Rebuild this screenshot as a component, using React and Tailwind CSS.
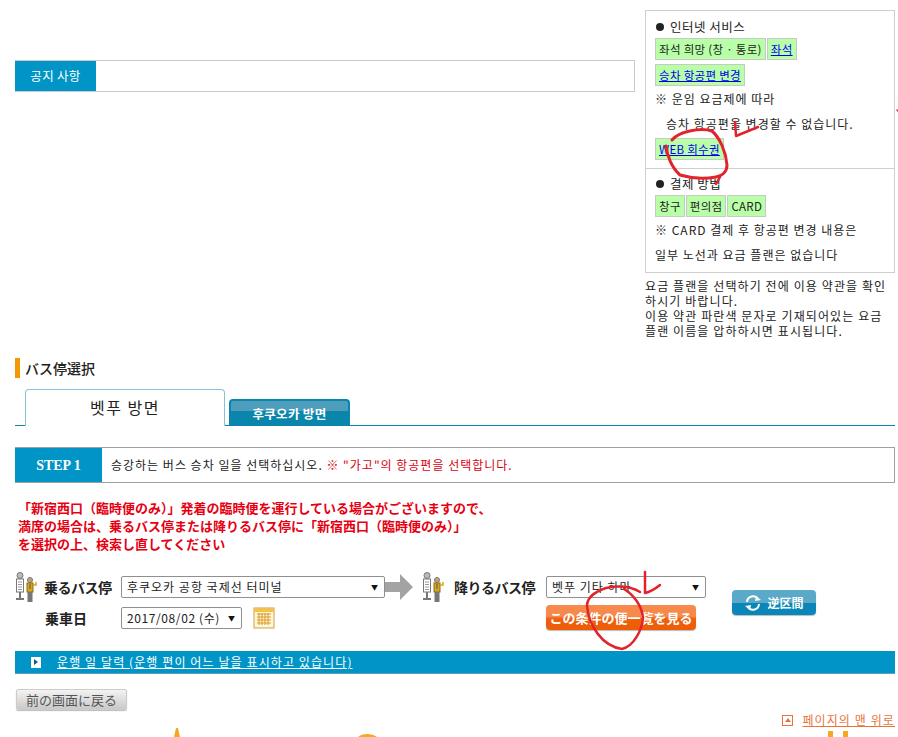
const kr = "font-['Noto_Sans_CJK_KR',sans-serif]";
const jp = "font-['Noto_Sans_CJK_JP',sans-serif]";

const Chip = ({ children, link }) => (
    <span className={`inline-block h-[22px] bg-[#b9ffa8] border border-[#c8c8c8] px-[3px] leading-[20px] text-[11.5px] tracking-[0.3px] mr-[1px] whitespace-nowrap ${link ? "text-[#0000ee] underline" : "text-[#222]"}`}>
        {children}
    </span>
);

const Heading = ({ children }) => (
    <div className="text-[12.500px] leading-[18px] tracking-[0.5px] flex items-center whitespace-nowrap">
        <span className="w-[8px] h-[8px] rounded-full bg-[#222] ml-[1px] mr-[6px]" />
        {children}
    </div>
);

const BusStopIcon = () => (
    <svg width="23" height="30" viewBox="0 0 23 30" className="shrink-0">
        <circle cx="5" cy="3.500" r="3" fill="#bbb" stroke="#777" />
        <rect x="1.500" y="7" width="7" height="13" fill="#fff" stroke="#777" />
        <path d="M3 10h4M3 12.500h4M3 15h4M3 17.500h4" stroke="#999" />
        <rect x="4" y="20" width="2" height="7" fill="#777" />
        <rect x="1" y="26" width="8" height="2" fill="#777" />
        <circle cx="15" cy="8" r="2.500" fill="#c9a27a" stroke="#777" />
        <rect x="12" y="11" width="6" height="9" fill="#d8a81c" stroke="#8a6d1a" />
        <path d="M15 12v5" stroke="#555" />
        <rect x="12.500" y="20" width="5" height="10" fill="#777" />
        <path d="M18 13h3v-3" fill="none" stroke="#d8a81c" strokeWidth="1.500" />
    </svg>
);

const SelectBox = ({ width, tracking, children }) => (
    <div className={`${width} h-[22px] shrink-0 bg-white border border-[#8f8f8f] rounded-[2px] flex items-center justify-between pl-[5px] pr-[6px] text-[12px] text-[#222] whitespace-nowrap ${kr}`}>
        <span className={tracking}>{children}</span>
        <span className="text-[7px] text-[#111]">▼</span>
    </div>
);

const Annotations = () => (
    <svg className="absolute inset-0 pointer-events-none" width="898" height="737" viewBox="0 0 898 737" fill="none">
        <g stroke="#e2232b" strokeLinecap="round" strokeLinejoin="round">
            <path d="M672 140C678 132 700 127 712 131C720 138 726 152 727 165C727 172 722 176 716 177C704 179 690 178 680 175C672 168 667 156 666 146" strokeWidth="3" />
            <path d="M720 177L716 184" strokeWidth="2.500" />
            <path d="M735 122L736 136L758 127" strokeWidth="2.500" />
            <path d="M897 110L898 111" strokeWidth="1.500" />
            <path d="M640 592C630 586 616 586 606 588C594 592 587 598 587 606C589 626 602 646 622 649C634 646 642 630 643 618C642 606 634 595 624 589" strokeWidth="2.500" />
            <path d="M645 572L645 593C650 592 655 589 660 585" strokeWidth="2.500" />
        </g>
        <g fill="#f7a823">
            <path d="M176 728L178 728L180 737L174 737Z" />
            <path d="M358 737C362 733 372 733 377 737Z" />
            <path d="M828 731H833V737H828ZM843 731H848V737H843Z" />
        </g>
    </svg>
);

export default function App() {
    return (
        <div className="relative w-[898px] h-[737px] overflow-hidden bg-white text-[#222] text-[12px]">
            <div className="pl-[15px] pr-[3px]">
                {/* top: notice + side box */}
                <div className="flex items-start pt-[10px]">
                    <div className="w-[620px] h-[32px] mt-[50px] flex border border-[#c9c9c9] border-l-0">
                        <div className={`w-[81px] bg-[#0095c6] text-white text-[12.500px] tracking-[0.3px] flex items-center justify-center ${kr}`}>공지 사항</div>
                    </div>
                    <div className={`ml-[10px] w-[250px] ${kr}`}>
                        <div className="border border-[#cfcfcf] border-b-0 px-[9px] pt-[7px] h-[158px]">
                            <Heading>인터넷 서비스</Heading>
                            <div className="mt-[2px] flex"><Chip>좌석 희망 (창 · 통로)</Chip><Chip link>좌석</Chip></div>
                            <div className="mt-[4px] flex"><Chip link>승차 항공편 변경</Chip></div>
                            <div className="mt-[4px] leading-[18px] tracking-[1px]">※ 운임 요금제에 따라</div>
                            <div className="mt-[7px] ml-[11px] leading-[18px] tracking-[1px] whitespace-nowrap">승차 항공편을 변경할 수 없습니다.</div>
                            <div className="mt-[5px] flex"><Chip link>WEB 회수권</Chip></div>
                        </div>
                        <div className="border border-[#cfcfcf] px-[9px] pt-[6px] h-[105px]">
                            <Heading>결제 방법</Heading>
                            <div className="mt-[2px] flex"><Chip>창구</Chip><Chip>편의점</Chip><Chip>CARD</Chip></div>
                            <div className="mt-[4px] leading-[18px] tracking-[1px] whitespace-nowrap">※ CARD 결제 후 항공편 변경 내용은</div>
                            <div className="mt-[7px] leading-[18px] tracking-[1px] whitespace-nowrap">일부 노선과 요금 플랜은 없습니다</div>
                        </div>
                        <p className="mt-[5px] leading-[15px] tracking-[1.100px] whitespace-nowrap text-[#222]">
                            요금 플랜을 선택하기 전에 이용 약관을 확인<br />하시기 바랍니다.<br />이용 약관 파란색 문자로 기재되어있는 요금<br />플랜 이름을 압하하시면 표시됩니다.
                        </p>
                    </div>
                </div>

                {/* section title */}
                <div className={`mt-[20px] flex items-center h-[20px] border-l-[5px] border-[#f39800] pl-[5px] text-[14px] font-medium ${jp}`}>バス停選択</div>

                {/* tabs */}
                <div className="mt-[12px] h-[36px] border-b border-[#0a86ad] flex items-end pl-[10px]">
                    <div className={`w-[200px] h-[37px] -mb-[1px] bg-white border border-b-0 border-[#85c3d6] rounded-t-[4px] flex items-center justify-center text-[16px] tracking-[1.500px] pb-[3px] ${kr}`}>벳푸 방면</div>
                    <div className={`ml-[4px] w-[121px] h-[26px] rounded-t-[4px] bg-[linear-gradient(#4f9dbc_0,#4f9dbc_10px,#0a86ad_10px)] border-t-2 border-x-2 border-[#0a86ad] flex items-center justify-center pt-[2px] text-[12.500px] tracking-[0.3px] font-bold text-white ${kr}`}>후쿠오카 방면</div>
                </div>

                {/* step */}
                <div className="mt-[21px] flex h-[36px] border border-[#a0a0a0] border-l-0">
                    <div className="w-[87px] bg-[#0095c6] text-white font-bold text-[14px] flex items-center justify-center font-['Liberation_Serif',serif]">STEP 1</div>
                    <div className={`pl-[9px] flex items-center tracking-[1px] whitespace-nowrap ${kr}`}>
                        승강하는 버스 승차 일을 선택하십시오.&nbsp;<span className="text-[#d7000f]">※ "가고"의 항공편을 선택합니다.</span>
                    </div>
                </div>

                {/* red note */}
                <p className={`mt-[16px] pl-[3px] text-[#e60012] font-bold text-[13px] leading-[18px] whitespace-nowrap ${jp}`}>
                    「新宿西口（臨時便のみ）」発着の臨時便を運行している場合がございますので、<br />
                    満席の場合は、乗るバス停または降りるバス停に「新宿西口（臨時便のみ）」<br />
                    を選択の上、検索し直してください
                </p>

                {/* search form */}
                <div className="mt-[19px] flex items-start">
                    <div>
                        <div className="flex items-center h-[30px]">
                            <BusStopIcon />
                            <span className={`ml-[6px] w-[77px] text-[14px] font-bold tracking-[-0.5px] whitespace-nowrap ${jp}`}>乗るバス停</span>
                            <SelectBox width="w-[264px]" tracking="tracking-[1px]">후쿠오카 공항 국제선 터미널</SelectBox>
                            <svg width="28" height="26" viewBox="0 0 28 26" className="shrink-0"><path d="M0 8H15V0L28 13L15 26V18H0Z" fill="#a3a3a3" /></svg>
                            <span className="ml-[9px]"><BusStopIcon /></span>
                            <span className={`ml-[9px] w-[92px] text-[14px] font-bold tracking-[-0.5px] whitespace-nowrap ${jp}`}>降りるバス停</span>
                            <SelectBox width="w-[160px]" tracking="tracking-[1px]">벳푸 기타 하마</SelectBox>
                        </div>
                        <div className="flex">
                            <div className="pt-[2px] flex items-center h-[30px]">
                                <span className={`ml-[30px] w-[76px] text-[14px] font-bold ${jp}`}>乗車日</span>
                                <SelectBox width="w-[121px]" tracking="tracking-[0.6px]">2017/08/02 (수)</SelectBox>
                                <svg width="22" height="22" viewBox="0 0 22 22" className="ml-[11px]">
                                    <rect x="1" y="1" width="20" height="20" fill="#fff6d6" stroke="#c9a24a" />
                                    <rect x="1" y="1" width="20" height="4" fill="#f2c14e" />
                                    <path d="M4 7h14M4 10h14M4 13h14M4 16h14M6 6v12M9 6v12M12 6v12M15 6v12" stroke="#d99a2b" strokeWidth="1" />
                                </svg>
                            </div>
                            <button className={`ml-[271px] mt-[3px] w-[150px] h-[25px] rounded-[4px] bg-[linear-gradient(#f58a4c_0,#f58a4c_45%,#ef5f0c_55%,#ee5c08)] text-white text-[13px] font-bold whitespace-nowrap shadow-[0_1px_1px_#bbb] ${jp}`}>この条件の便一覧を見る</button>
                        </div>
                    </div>
                    <button className={`ml-[26px] mt-[18px] w-[84px] h-[25px] rounded-[4px] bg-[linear-gradient(#5aa9c9_0,#5aa9c9_50%,#0a86b8_50%)] text-white text-[12px] font-bold flex items-center justify-center gap-[5px] shadow-[0_1px_1px_#bbb] ${jp}`}>
                        <svg width="18" height="16" viewBox="0 0 18 16" fill="none"><path d="M3 7A6 6 0 0 1 14 4M15 9A6 6 0 0 1 4 12" stroke="#fff" strokeWidth="2" /><path d="M12 1L17 5L11 6ZM6 15L1 11L7 10Z" fill="#fff" /></svg>
                        逆区間
                    </button>
                </div>

                {/* calendar bar */}
                <div className={`mt-[19px] h-[23px] bg-[#0095c6] border-b border-[#5a9fb5] flex items-center pl-[16px] text-white ${kr}`}>
                    <span className="w-[10px] h-[11px] bg-white flex items-center justify-center"><span className="w-0 h-0 border-y-[3px] border-y-transparent border-l-[4px] border-l-[#0a5f80]" /></span>
                    <span className="ml-[16px] underline tracking-[1.100px] whitespace-nowrap">운행 일 달력 (운행 편이 어느 날을 표시하고 있습니다)</span>
                </div>

                {/* footer buttons */}
                <div className="mt-[15px] flex items-start justify-between">
                    <button className={`ml-[1px] w-[111px] h-[21px] rounded-[2px] bg-[linear-gradient(#f3f3f3,#c9c9c9)] border border-[#ccc] text-[13px] text-[#555] whitespace-nowrap shadow-[0_1px_1px_#bbb] ${jp}`}>前の画面に戻る</button>
                    <div className={`mt-[22px] flex items-center text-[#e8743b] ${kr}`}>
                        <span className="w-[11px] h-[11px] border border-[#e8743b] flex items-center justify-center"><span className="w-0 h-0 border-x-[3px] border-x-transparent border-b-[4px] border-b-[#e8743b]" /></span>
                        <span className="ml-[9px] underline tracking-[1.100px] whitespace-nowrap">페이지의 맨 위로</span>
                    </div>
                </div>
            </div>
            <Annotations />
        </div>
    );
}
